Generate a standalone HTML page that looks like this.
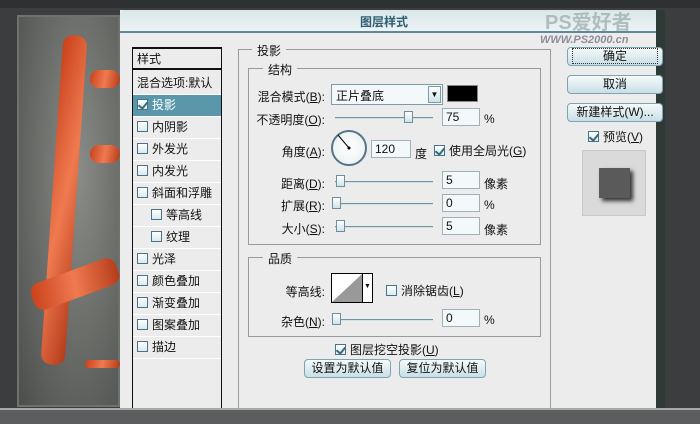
<!DOCTYPE html>
<html><head><meta charset="utf-8"><style>
*{margin:0;padding:0;box-sizing:border-box}
body{width:700px;height:424px;overflow:hidden;background:#3b3d3f;font-family:"Liberation Sans","Noto Sans CJK SC",sans-serif;font-size:12px;color:#111;position:relative}
.a{position:absolute}
.img{left:17px;top:15px;width:103px;height:392px;background:radial-gradient(ellipse at 60% 40%,#8a8c88,#5e615d 70%,#4b4e4b);border:2px solid #6f7170}
.stroke{background:linear-gradient(100deg,#c9401a,#f07a50 50%,#b33a18);border-radius:10px}
.dlg{left:120px;top:10px;width:538px;height:398px;background:#ececec}
.title{left:120px;top:10px;width:538px;height:23px;background:linear-gradient(#d8e6ea,#eef3f4);border-bottom:2px solid #5d8a9b;border-radius:6px 6px 0 0}
.list{left:132px;top:47px;width:90px;height:362px;border:1px solid #111;border-top:2px solid #111;border-bottom:none;background:#ececec}
.item{position:absolute;left:0;width:88px;height:22px;border-bottom:1px solid #fff;line-height:21px;padding-left:4px}
.cb{display:inline-block;width:11px;height:11px;border:1px solid #4c7384;background:linear-gradient(#fff,#d9eaf0);vertical-align:-1px;margin-right:4px;position:relative}
.cb.on::after{content:"";position:absolute;left:2px;top:0px;width:4px;height:7px;border:solid #3b6a7e;border-width:0 2px 2px 0;transform:rotate(40deg)}
.box{border:1px solid #9a9a9a}
.leg{background:#ececec;padding:0 5px}
.lbl{text-align:right;width:100px}
.inp{background:#f3f8fa;border:1px solid #9fb0b6;height:18px;line-height:16px;padding-left:3px}
.sl{height:2px;background:#6f95a5;border-bottom:1px solid #cfe0e6}
.th{width:9px;height:12px;border:1px solid #6d8f9c;background:linear-gradient(#fff,#cfe3ea)}
.btn{border:1px solid #7ea3b1;border-radius:4px;background:linear-gradient(#f5fafb,#c9dfe6);text-align:center;line-height:17px;height:19px}
u{text-decoration:underline}
</style></head><body>
<div class="a" style="left:0;top:0;width:700px;height:8px;background:#2e3032"></div>
<div class="a img"></div>
<div class="a stroke" style="left:52px;top:35px;width:24px;height:330px;transform:rotate(4deg)"></div>
<div class="a stroke" style="left:30px;top:270px;width:90px;height:28px;transform:rotate(-20deg)"></div>
<div class="a stroke" style="left:90px;top:70px;width:30px;height:18px"></div>
<div class="a stroke" style="left:90px;top:145px;width:30px;height:18px"></div>
<div class="a stroke" style="left:85px;top:360px;width:35px;height:8px"></div>
<div class="a dlg"></div>
<div class="a title"></div>
<div class="a" style="left:360px;top:13px;font-weight:bold;color:#2d5d73;font-size:12px">图层样式</div>
<div class="a" style="left:545px;top:6px;color:#9aa;font-size:20px;font-weight:bold;opacity:.7">PS爱好者</div>
<div class="a" style="left:540px;top:34px;color:#778;font-size:11px;font-style:italic;font-weight:bold;opacity:.8">WWW.PS2000.cn</div>
<div class="a" style="left:656px;top:10px;width:9px;height:398px;background:#2f3a36"></div>

<div class="a list">
<div class="item" style="top:0;height:21px;border-bottom:2px solid #111">样式</div>
<div class="item" style="top:24px">混合选项:默认</div>
<div class="item" style="top:46px;background:#5a97aa;color:#fff"><span class="cb on"></span>投影</div>
<div class="item" style="top:68px"><span class="cb"></span>内阴影</div>
<div class="item" style="top:90px"><span class="cb"></span>外发光</div>
<div class="item" style="top:112px"><span class="cb"></span>内发光</div>
<div class="item" style="top:134px"><span class="cb"></span>斜面和浮雕</div>
<div class="item" style="top:156px;padding-left:18px"><span class="cb"></span>等高线</div>
<div class="item" style="top:178px;padding-left:18px"><span class="cb"></span>纹理</div>
<div class="item" style="top:200px"><span class="cb"></span>光泽</div>
<div class="item" style="top:222px"><span class="cb"></span>颜色叠加</div>
<div class="item" style="top:244px"><span class="cb"></span>渐变叠加</div>
<div class="item" style="top:266px"><span class="cb"></span>图案叠加</div>
<div class="item" style="top:288px"><span class="cb"></span>描边</div>
</div>

<div class="a box" style="left:238px;top:49px;width:313px;height:362px;border-bottom:none"></div>
<div class="a leg" style="left:252px;top:42px">投影</div>
<div class="a box" style="left:248px;top:68px;width:293px;height:177px"></div>
<div class="a leg" style="left:263px;top:61px">结构</div>

<div class="a lbl" style="left:225px;top:88px">混合模式(<u>B</u>):</div>
<div class="a" style="left:331px;top:84px;width:112px;height:21px;border:1px solid #7d9aa5;background:#f3f8fa;padding:2px 4px">正片叠底</div>
<div class="a" style="left:428px;top:86px;width:13px;height:17px;border:1px solid #7d9aa5;background:linear-gradient(#fff,#cfe3ea);font-size:8px;text-align:center;line-height:16px">▼</div>
<div class="a" style="left:447px;top:85px;width:31px;height:17px;background:#000;border:1px solid #888"></div>

<div class="a lbl" style="left:225px;top:111px">不透明度(<u>O</u>):</div>
<div class="a sl" style="left:335px;top:117px;width:98px"></div>
<div class="a th" style="left:404px;top:111px"></div>
<div class="a inp" style="left:442px;top:108px;width:38px">75</div>
<div class="a" style="left:484px;top:112px">%</div>

<div class="a lbl" style="left:225px;top:143px">角度(<u>A</u>):</div>
<div class="a" style="left:331px;top:130px;width:36px;height:36px;border-radius:50%;border:2px solid #54748a;background:radial-gradient(#fff,#e8eef0)"></div>
<svg class="a" style="left:331px;top:130px" width="36" height="36"><line x1="18" y1="18" x2="7" y2="5" stroke="#000" stroke-width="1"/><circle cx="18" cy="18" r="1.5"/></svg>
<div class="a inp" style="left:371px;top:140px;width:40px">120</div>
<div class="a" style="left:415px;top:145px">度</div>
<div class="a" style="left:434px;top:142px"><span class="cb on"></span>使用全局光(<u>G</u>)</div>

<div class="a lbl" style="left:225px;top:175px">距离(<u>D</u>):</div>
<div class="a sl" style="left:335px;top:181px;width:98px"></div>
<div class="a th" style="left:336px;top:175px"></div>
<div class="a inp" style="left:442px;top:171px;width:38px">5</div>
<div class="a" style="left:484px;top:175px">像素</div>

<div class="a lbl" style="left:225px;top:197px">扩展(<u>R</u>):</div>
<div class="a sl" style="left:335px;top:203px;width:98px"></div>
<div class="a th" style="left:332px;top:197px"></div>
<div class="a inp" style="left:442px;top:194px;width:38px">0</div>
<div class="a" style="left:484px;top:198px">%</div>

<div class="a lbl" style="left:225px;top:220px">大小(<u>S</u>):</div>
<div class="a sl" style="left:335px;top:226px;width:98px"></div>
<div class="a th" style="left:336px;top:220px"></div>
<div class="a inp" style="left:442px;top:217px;width:38px">5</div>
<div class="a" style="left:484px;top:221px">像素</div>

<div class="a box" style="left:248px;top:257px;width:293px;height:80px"></div>
<div class="a leg" style="left:263px;top:250px">品质</div>
<div class="a lbl" style="left:225px;top:283px">等高线:</div>
<div class="a" style="left:331px;top:273px;width:42px;height:30px;border:1px solid #000;background:#fff"></div>
<svg class="a" style="left:332px;top:274px" width="30" height="28"><polygon points="0,28 30,0 30,28" fill="#999"/></svg>
<div class="a" style="left:362px;top:274px;width:10px;height:28px;border-left:1px solid #000;font-size:7px;line-height:26px;text-align:center">▼</div>
<div class="a" style="left:386px;top:282px"><span class="cb"></span>消除锯齿(<u>L</u>)</div>
<div class="a lbl" style="left:225px;top:313px">杂色(<u>N</u>):</div>
<div class="a sl" style="left:335px;top:319px;width:98px"></div>
<div class="a th" style="left:332px;top:313px"></div>
<div class="a inp" style="left:442px;top:309px;width:38px">0</div>
<div class="a" style="left:484px;top:313px">%</div>

<div class="a" style="left:335px;top:341px"><span class="cb on"></span>图层挖空投影(<u>U</u>)</div>
<div class="a btn" style="left:304px;top:359px;width:87px">设置为默认值</div>
<div class="a btn" style="left:399px;top:359px;width:87px">复位为默认值</div>

<div class="a btn" style="left:567px;top:47px;width:96px"><span style="border:1px dotted #333;padding:0 30px">确定</span></div>
<div class="a btn" style="left:567px;top:75px;width:96px">取消</div>
<div class="a btn" style="left:567px;top:103px;width:96px">新建样式(W)...</div>
<div class="a" style="left:588px;top:128px"><span class="cb on"></span>预览(<u>V</u>)</div>
<div class="a" style="left:582px;top:150px;width:64px;height:66px;background:#dadada;border:1px solid #c8c8c8"></div>
<div class="a" style="left:599px;top:168px;width:31px;height:30px;background:#5a5a5a;box-shadow:3px 3px 4px #333"></div>
<div class="a" style="left:0;top:408px;width:700px;height:16px;background:#5b5d5f;border-top:2px solid #a8aaa9"></div>
</body></html>
